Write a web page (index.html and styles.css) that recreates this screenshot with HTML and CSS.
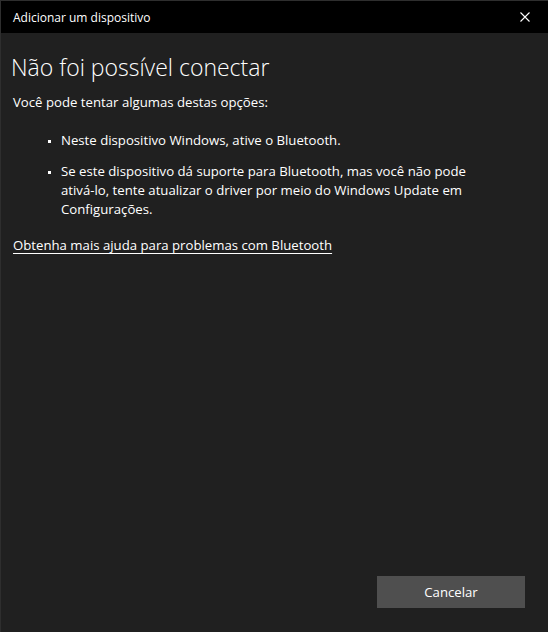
FILE: index.html
```html
<!DOCTYPE html>
<html lang="pt-BR">
<head>
<meta charset="utf-8">
<title>Adicionar um dispositivo</title>
<link rel="stylesheet" href="styles.css">
</head>
<body>
<div class="window">
  <header class="titlebar">
    <span class="title">Adicionar um dispositivo</span>
    <button class="close" aria-label="Fechar">
      <svg width="10" height="10" viewBox="0 0 10 10"><path d="M0.5 0.5 L9.5 9.5 M9.5 0.5 L0.5 9.5" stroke="#fff" stroke-width="1.1" fill="none"/></svg>
    </button>
  </header>
  <main class="content">
    <h1 class="heading">Não foi possível conectar</h1>
    <p class="intro">Você pode tentar algumas destas opções:</p>
    <ul class="options">
      <li>Neste dispositivo Windows, ative o Bluetooth.</li>
      <li>Se este dispositivo dá suporte para Bluetooth, mas você não pode ativá-lo, tente atualizar o driver por meio do Windows Update em Configurações.</li>
    </ul>
    <a class="help" href="#">Obtenha mais ajuda para problemas com Bluetooth</a>
  </main>
  <footer class="footer">
    <button class="btn">Cancelar</button>
  </footer>
</div>
</body>
</html>
```
FILE: styles.css
```css
html, body {
  margin: 0;
  padding: 0;
  height: 100%;
  background: #202020;
}
body {
  font-family: "Open Sans", "Noto Sans", sans-serif;
  color: #fff;
}
.window {
  box-sizing: border-box;
  height: 632px;
  width: 548px;
  border-top: 1px solid #2e2e2e;
  border-left: 1px solid #2e2e2e;
  display: flex;
  flex-direction: column;
  background: #202020;
}
.titlebar {
  height: 32px;
  background: #000;
  display: flex;
  align-items: center;
  justify-content: space-between;
  flex: none;
}
.title {
  font-size: 12px;
  padding-left: 12px;
  color: #fff;
}
.close {
  width: 46px;
  height: 32px;
  background: transparent;
  border: 0;
  padding: 0;
  display: flex;
  align-items: center;
  justify-content: center;
}
.content {
  flex: 1;
  padding: 0 12px;
}
.heading {
  font-size: 23px;
  font-weight: 300;
  margin: 18px 0 0 -2px;
  line-height: 32px;
}
.intro {
  font-size: 13.2px;
  margin: 10px 0 0;
  line-height: 19px;
}
.options {
  margin: 19px 0 0;
  padding-left: 48px;
  font-size: 13.2px;
  line-height: 19px;
  list-style: none;
}
.options li {
  position: relative;
  margin-bottom: 12px;
  max-width: 420px;
}
.options li::before {
  content: "";
  position: absolute;
  left: -13px;
  top: 9px;
  width: 3px;
  height: 3px;
  background: #fff;
}
.help {
  display: inline-block;
  margin-top: 5px;
  font-size: 13.2px;
  line-height: 19px;
  color: #fff;
  text-decoration: underline;
  text-underline-offset: 3px;
}
.footer {
  display: flex;
  justify-content: flex-end;
  padding: 0 23px 24px 0;
  flex: none;
}
.btn {
  width: 148px;
  height: 32px;
  border: 0;
  background: #4f4f4f;
  color: #fff;
  font-family: inherit;
  font-size: 13.2px;
}
```
